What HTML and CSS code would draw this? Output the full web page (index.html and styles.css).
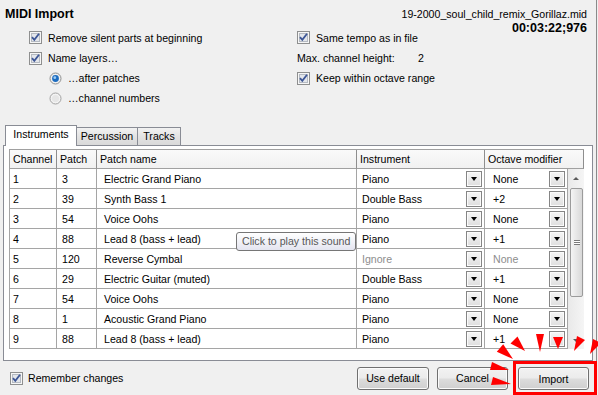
FILE: index.html
```html
<!DOCTYPE html>
<html lang="en">
	<head>
		<meta charset="UTF-8" />
		<title>MIDI Import</title>
		<link rel="stylesheet" href="styles.css">
	</head>
	<body>
		<div class="dialog">
			<div class="top">
				<div class="col-left">
					<div class="title">MIDI Import</div>
					<div class="opts">
						<div class="opt first">
							<svg class="cb" viewBox="0 0 13 13"><rect x="0.5" y="0.5" width="12" height="12" fill="#f6f6f6" stroke="#8e8f8f"/><rect x="2.5" y="2.5" width="8" height="8" fill="#e3e6eb" stroke="#b5bac2"/><path d="M3 6.2 L5.3 8.8 L10 2.8" fill="none" stroke="#3d5696" stroke-width="1.8"/></svg>
							<span>Remove silent parts at beginning</span>
						</div>
						<div class="opt">
							<svg class="cb" viewBox="0 0 13 13"><rect x="0.5" y="0.5" width="12" height="12" fill="#f6f6f6" stroke="#8e8f8f"/><rect x="2.5" y="2.5" width="8" height="8" fill="#e3e6eb" stroke="#b5bac2"/><path d="M3 6.2 L5.3 8.8 L10 2.8" fill="none" stroke="#3d5696" stroke-width="1.8"/></svg>
							<span>Name layers…</span>
						</div>
						<div class="opt sub">
							<svg class="rb" viewBox="0 0 13 13"><circle cx="6.5" cy="6.5" r="5.5" fill="#f0f0f0" stroke="#8e8f8f"/><circle cx="6.5" cy="6.5" r="3.4" fill="#1c6cc0"/><circle cx="5.8" cy="5.7" r="1.4" fill="#9ccbf2"/></svg>
							<span>…after patches</span>
						</div>
						<div class="opt sub">
							<svg class="rb" viewBox="0 0 13 13"><circle cx="6.5" cy="6.5" r="5.5" fill="#f3f3f3" stroke="#a2a2a2"/><circle cx="6.5" cy="6.5" r="3.6" fill="#e6e6e6"/></svg>
							<span>…channel numbers</span>
						</div>
					</div>
				</div>
				<div class="col-right">
					<div class="file-info">
						<div>19-2000_soul_child_remix_Gorillaz.mid</div>
						<b>00:03:22;976</b>
					</div>
					<div class="opts">
						<div class="opt first">
							<svg class="cb" viewBox="0 0 13 13"><rect x="0.5" y="0.5" width="12" height="12" fill="#f6f6f6" stroke="#8e8f8f"/><rect x="2.5" y="2.5" width="8" height="8" fill="#e3e6eb" stroke="#b5bac2"/><path d="M3 6.2 L5.3 8.8 L10 2.8" fill="none" stroke="#3d5696" stroke-width="1.8"/></svg>
							<span>Same tempo as in file</span>
						</div>
						<div class="opt">
							<span class="field-label">Max. channel height:</span>
							<span>2</span>
						</div>
						<div class="opt">
							<svg class="cb" viewBox="0 0 13 13"><rect x="0.5" y="0.5" width="12" height="12" fill="#f6f6f6" stroke="#8e8f8f"/><rect x="2.5" y="2.5" width="8" height="8" fill="#e3e6eb" stroke="#b5bac2"/><path d="M3 6.2 L5.3 8.8 L10 2.8" fill="none" stroke="#3d5696" stroke-width="1.8"/></svg>
							<span>Keep within octave range</span>
						</div>
					</div>
				</div>
			</div>

			<div class="tabs">
				<div class="tab active tab-instruments">Instruments</div>
				<div class="tab tab-percussion">Percussion</div>
				<div class="tab tab-tracks">Tracks</div>
			</div>

			<div class="panel">
				<div class="grid">
					<div class="ghead">
						<div class="hc c-ch">Channel</div>
						<div class="hc c-patch">Patch</div>
						<div class="hc c-name">Patch name</div>
						<div class="hc c-inst">Instrument</div>
						<div class="hc c-oct-h">Octave modifier</div>
					</div>
					<div class="gbody">
						<div class="rows">
							<div class="row">
								<div class="cell c-ch">1</div>
								<div class="cell c-patch">3</div>
								<div class="cell c-name">Electric Grand Piano</div>
								<div class="cell c-inst"><span>Piano</span><span class="dd"></span></div>
								<div class="cell c-oct"><span>None</span><span class="dd"></span></div>
							</div>
							<div class="row">
								<div class="cell c-ch">2</div>
								<div class="cell c-patch">39</div>
								<div class="cell c-name">Synth Bass 1</div>
								<div class="cell c-inst"><span>Double Bass</span><span class="dd"></span></div>
								<div class="cell c-oct"><span>+2</span><span class="dd"></span></div>
							</div>
							<div class="row">
								<div class="cell c-ch">3</div>
								<div class="cell c-patch">54</div>
								<div class="cell c-name">Voice Oohs</div>
								<div class="cell c-inst"><span>Piano</span><span class="dd"></span></div>
								<div class="cell c-oct"><span>None</span><span class="dd"></span></div>
							</div>
							<div class="row">
								<div class="cell c-ch">4</div>
								<div class="cell c-patch">88</div>
								<div class="cell c-name">Lead 8 (bass + lead)</div>
								<div class="cell c-inst"><span>Piano</span><span class="dd"></span></div>
								<div class="cell c-oct"><span>+1</span><span class="dd"></span></div>
							</div>
							<div class="row">
								<div class="cell c-ch">5</div>
								<div class="cell c-patch">120</div>
								<div class="cell c-name">Reverse Cymbal</div>
								<div class="cell c-inst"><span class="muted">Ignore</span><span class="dd"></span></div>
								<div class="cell c-oct"><span class="muted">None</span><span class="dd"></span></div>
							</div>
							<div class="row">
								<div class="cell c-ch">6</div>
								<div class="cell c-patch">29</div>
								<div class="cell c-name">Electric Guitar (muted)</div>
								<div class="cell c-inst"><span>Double Bass</span><span class="dd"></span></div>
								<div class="cell c-oct"><span>+1</span><span class="dd"></span></div>
							</div>
							<div class="row">
								<div class="cell c-ch">7</div>
								<div class="cell c-patch">54</div>
								<div class="cell c-name">Voice Oohs</div>
								<div class="cell c-inst"><span>Piano</span><span class="dd"></span></div>
								<div class="cell c-oct"><span>None</span><span class="dd"></span></div>
							</div>
							<div class="row">
								<div class="cell c-ch">8</div>
								<div class="cell c-patch">1</div>
								<div class="cell c-name">Acoustic Grand Piano</div>
								<div class="cell c-inst"><span>Piano</span><span class="dd"></span></div>
								<div class="cell c-oct"><span>None</span><span class="dd"></span></div>
							</div>
							<div class="row">
								<div class="cell c-ch">9</div>
								<div class="cell c-patch">88</div>
								<div class="cell c-name">Lead 8 (bass + lead)</div>
								<div class="cell c-inst"><span>Piano</span><span class="dd"></span></div>
								<div class="cell c-oct"><span>+1</span><span class="dd"></span></div>
							</div>
						</div>
						<div class="vscroll">
							<div class="sb-btn"><span class="arrow-up"></span></div>
							<div class="thumb"><span class="grip"></span></div>
							<div class="sb-track"></div>
							<div class="sb-btn"><span class="arrow-down"></span></div>
						</div>
					</div>
				</div>
			</div>

			<div class="footer">
				<svg class="cb" viewBox="0 0 13 13"><rect x="0.5" y="0.5" width="12" height="12" fill="#f6f6f6" stroke="#8e8f8f"/><rect x="2.5" y="2.5" width="8" height="8" fill="#e3e6eb" stroke="#b5bac2"/><path d="M3 6.2 L5.3 8.8 L10 2.8" fill="none" stroke="#3d5696" stroke-width="1.8"/></svg>
				<span class="remember">Remember changes</span>
				<div class="buttons">
					<button type="button" class="btn btn-default">Use default</button>
					<button type="button" class="btn btn-cancel">Cancel</button>
					<div class="highlight">
						<button type="button" class="btn btn-import">Import</button>
					</div>
				</div>
			</div>

			<!-- tooltip over the table -->
			<div class="tooltip">Click to play this sound</div>

			<!-- red annotation arrows -->
			<svg class="arrows" width="112" height="65" viewBox="0 0 112 65">
				<g fill="#ff0000">
					<polygon points="37,21 22.5,13.5 29.5,6.5"/>
					<polygon points="52,22 48,4 56,4"/>
					<polygon points="70,19 65,7 75,7"/>
					<polygon points="86,21 89,6 97,10"/>
					<polygon points="102,24 105,9 113,13"/>
					<polygon points="25,29 8.8,21.8 15.2,14.2"/>
					<polygon points="21,40 2,40 4,32"/>
					<polygon points="23,54 3,55 5,47"/>
				</g>
			</svg>
		</div>
	</body>
</html>
```

FILE: styles.css
```css
/* General styling */
body {
	margin: 0;
	background-color: #f0f0f0;
	font-family: "Liberation Sans", Arial, sans-serif;
	font-size: 10.6px;
	color: #000;
}

.dialog {
	position: relative;
	width: 596px;
	height: 395px;
	border-right: 1px solid #8a8a8a;
}

/* Top options */
.top {
	display: grid;
	grid-template-columns: 292px 1fr;
	padding: 7px 9px 0 5px;
}
.title {
	font-weight: bold;
	font-size: 12.5px;
	line-height: 14px;
	margin-bottom: 6px;
}
.col-left .opts {
	padding-left: 24px;
}
.opt {
	display: flex;
	align-items: center;
	gap: 6px;
	height: 20px;
}
.opt.first {
	height: 21px;
}
.opt.sub {
	padding-left: 20px;
}
.cb,
.rb {
	width: 13px;
	height: 13px;
	flex-shrink: 0;
}
.file-info {
	text-align: right;
	line-height: 14px;
	margin-bottom: -8px;
}
.file-info b {
	display: block;
	font-size: 12.5px;
}
.field-label {
	width: 115px;
}

/* Tabs */
.tabs {
	display: flex;
	align-items: flex-end;
	height: 20px;
	margin-top: 17px;
	padding-left: 5px;
}
.tab {
	box-sizing: border-box;
	height: 18px;
	line-height: 16px;
	text-align: center;
	border: 1px solid #898c95;
	border-bottom: none;
	background: linear-gradient(#f2f2f2, #e3e3e3 50%, #d9d9d9);
}
.tab.active {
	position: relative;
	z-index: 1;
	height: 21px;
	margin-bottom: -1px;
	line-height: 17px;
	background: #fff;
}
.tab-instruments {
	width: 72px;
}
.tab-percussion {
	width: 61px;
	border-left: none;
}
.tab-tracks {
	width: 43px;
	border-left: none;
}

/* Tab panel with table */
.panel {
	box-sizing: border-box;
	height: 216px;
	margin: 0 3px;
	padding: 3px 0 0 5px;
	border: 1px solid #898c95;
	background: #fff;
}
.grid {
	width: 575px;
}
.ghead {
	display: flex;
	height: 20px;
	border-top: 1px solid #a0a0a0;
	box-sizing: border-box;
	background: linear-gradient(#fafafa, #f0f0f0);
}
.hc {
	box-sizing: border-box;
	border-right: 1px solid #8e8e8e;
	border-bottom: 1px solid #a0a0a0;
	padding-left: 3px;
	line-height: 19px;
	white-space: nowrap;
}
.hc.c-ch {
	border-left: 1px solid #a0a0a0;
}
.c-ch { width: 48px; }
.c-patch { width: 40px; }
.c-name { width: 260px; }
.c-inst { width: 128px; }
.c-oct { width: 83px; }
.c-oct-h { width: 99px; }

.gbody {
	display: flex;
}
.rows {
	width: 559px;
}
.row {
	display: flex;
	height: 20px;
	box-sizing: border-box;
	border-bottom: 1px solid #a5a5a5;
}
.cell {
	box-sizing: border-box;
	border-right: 1px solid #a5a5a5;
	line-height: 20px;
	white-space: nowrap;
}
.cell.c-ch {
	border-left: 1px solid #a5a5a5;
	padding-left: 3px;
}
.cell.c-patch { padding-left: 5px; }
.cell.c-name { padding-left: 7px; }
.cell.c-inst,
.cell.c-oct {
	display: flex;
	align-items: center;
	justify-content: space-between;
	padding-right: 2px;
}
.cell.c-inst { padding-left: 5px; }
.cell.c-oct { padding-left: 8px; }
.muted {
	color: #8d8d8d;
}
.dd {
	box-sizing: border-box;
	width: 16px;
	height: 16px;
	border: 1px solid #858585;
	background: linear-gradient(#f6f6f6, #dedede);
	box-shadow: inset 0 0 0 1px #fbfbfb;
	display: flex;
	align-items: center;
	justify-content: center;
}
.dd::after {
	content: "";
	border-left: 3.5px solid transparent;
	border-right: 3.5px solid transparent;
	border-top: 4px solid #000;
	margin-top: 1px;
}

/* Vertical scrollbar */
.vscroll {
	display: flex;
	flex-direction: column;
	width: 16px;
	height: 180px;
	background: linear-gradient(90deg, #e9e9e9, #f5f5f5);
}
.sb-btn {
	height: 18px;
	display: flex;
	align-items: center;
	justify-content: center;
}
.arrow-up {
	border-left: 3px solid transparent;
	border-right: 3px solid transparent;
	border-bottom: 3px solid #5a5a5a;
}
.arrow-down {
	border-left: 3px solid transparent;
	border-right: 3px solid transparent;
	border-top: 3px solid #5a5a5a;
}
.thumb {
	box-sizing: border-box;
	height: 109px;
	margin: 1px 1px 0 2px;
	border: 1px solid #9b9b9b;
	border-radius: 2px;
	background: linear-gradient(90deg, #f4f4f4, #e6e6e6 50%, #d8d8d8);
	display: flex;
	align-items: center;
	justify-content: center;
}
.grip {
	width: 6px;
	height: 5px;
	border-top: 1px solid #7a7a7a;
	border-bottom: 1px solid #7a7a7a;
	background: linear-gradient(#fff 0 1px, #7a7a7a 1px 2px, #fff 2px 3px) center / 6px 3px no-repeat;
	box-sizing: border-box;
}
.sb-track {
	flex: 1;
}

/* Footer with buttons */
.footer {
	display: flex;
	align-items: center;
	height: 34px;
	padding-left: 10px;
	margin-right: -1px;
}
.remember {
	margin-left: 5px;
}
.buttons {
	display: flex;
	align-items: center;
	margin-left: auto;
}
.btn {
	box-sizing: border-box;
	height: 23px;
	padding: 0;
	border: 1px solid #707070;
	border-radius: 3px;
	background: linear-gradient(#f2f2f2 0%, #ebebeb 49%, #dddddd 51%, #cfcfcf 100%);
	box-shadow: inset 0 0 0 1px #fbfbfb;
	font-family: inherit;
	font-size: 10.6px;
	color: #000;
}
.btn-default {
	width: 72px;
	margin-right: 8px;
}
.btn-cancel {
	width: 71px;
	margin-right: 5px;
}
.btn-import {
	width: 71px;
}
.highlight {
	box-sizing: border-box;
	height: 34px;
	padding: 3px 5px 2px 2px;
	border: 3px solid #ff0000;
	display: flex;
}

/* Tooltip over the table */
.tooltip {
	position: absolute;
	left: 236px;
	top: 232px;
	box-sizing: border-box;
	height: 19px;
	padding: 0 5px;
	line-height: 17px;
	border: 1px solid #767676;
	border-radius: 3px;
	background: linear-gradient(#ffffff, #e4e5f0);
	color: #575757;
	white-space: nowrap;
}

/* Red annotation arrows */
.arrows {
	position: absolute;
	left: 488px;
	top: 330px;
}
```
